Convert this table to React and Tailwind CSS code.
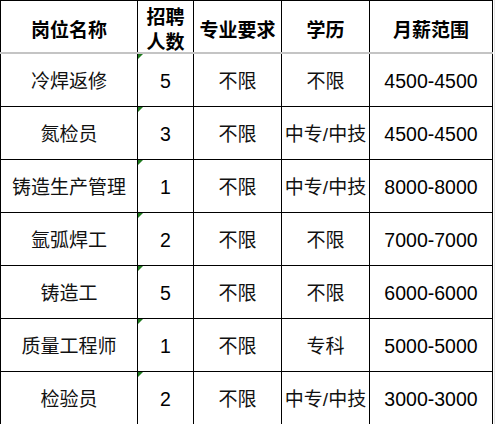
import React from "react";

const rows = [
  ["冷焊返修", "5", "不限", "不限", "4500-4500"],
  ["氮检员", "3", "不限", "中专/中技", "4500-4500"],
  ["铸造生产管理", "1", "不限", "中专/中技", "8000-8000"],
  ["氩弧焊工", "2", "不限", "不限", "7000-7000"],
  ["铸造工", "5", "不限", "不限", "6000-6000"],
  ["质量工程师", "1", "不限", "专科", "5000-5000"],
  ["检验员", "2", "不限", "中专/中技", "3000-3000"],
];

const font = {
  fontFamily: '"Liberation Sans", "Noto Sans CJK SC", sans-serif',
};

export default function App() {
  return (
    <div
      className="w-[496px] h-[424px] bg-white overflow-hidden flex text-black"
      style={font}
    >
      <div className="w-[493px] flex flex-col">
        <div className="bg-black pt-px px-px">
          <div className="grid grid-cols-[136px_55px_87px_87px_122px] gap-x-px h-[51px] text-[19px] font-bold">
            <div className="bg-white flex items-center justify-center pt-[6px]">岗位名称</div>
            <div className="bg-white flex flex-col items-center justify-center leading-[25px] pt-[4px]">
              <span>招聘</span>
              <span>人数</span>
            </div>
            <div className="bg-white flex items-center justify-center pt-[6px]">专业要求</div>
            <div className="bg-white flex items-center justify-center pt-[6px]">学历</div>
            <div className="bg-white flex items-center justify-center pt-[6px]">月薪范围</div>
          </div>
        </div>
        <div className="h-[2px] bg-[#c4c4c4]" />
        <div className="bg-black px-px grid grid-cols-[136px_55px_87px_87px_122px] auto-rows-[52px] gap-px text-[19px]">
          {rows.map((r, i) => (
            <React.Fragment key={i}>
              <div className="bg-white flex items-center justify-center pt-[4px] text-[#111]">{r[0]}</div>
              <div className="bg-white relative flex items-center justify-center pt-[4px] text-[19.5px]">
                <span className="absolute left-0 top-0 w-0 h-0 border-t-[5px] border-t-[#1f7a1f] border-r-[5px] border-r-transparent" />
                {r[1]}
              </div>
              <div className="bg-white flex items-center justify-center pt-[4px] text-[#111]">{r[2]}</div>
              <div className="bg-white flex items-center justify-center pt-[4px] text-[#111]">{r[3]}</div>
              <div className="bg-white flex items-center justify-center pt-[4px] text-[19.5px]">{r[4]}</div>
            </React.Fragment>
          ))}
        </div>
      </div>
      <div className="w-px" />
      <div className="w-px bg-[#e6e6e6]" />
    </div>
  );
}
